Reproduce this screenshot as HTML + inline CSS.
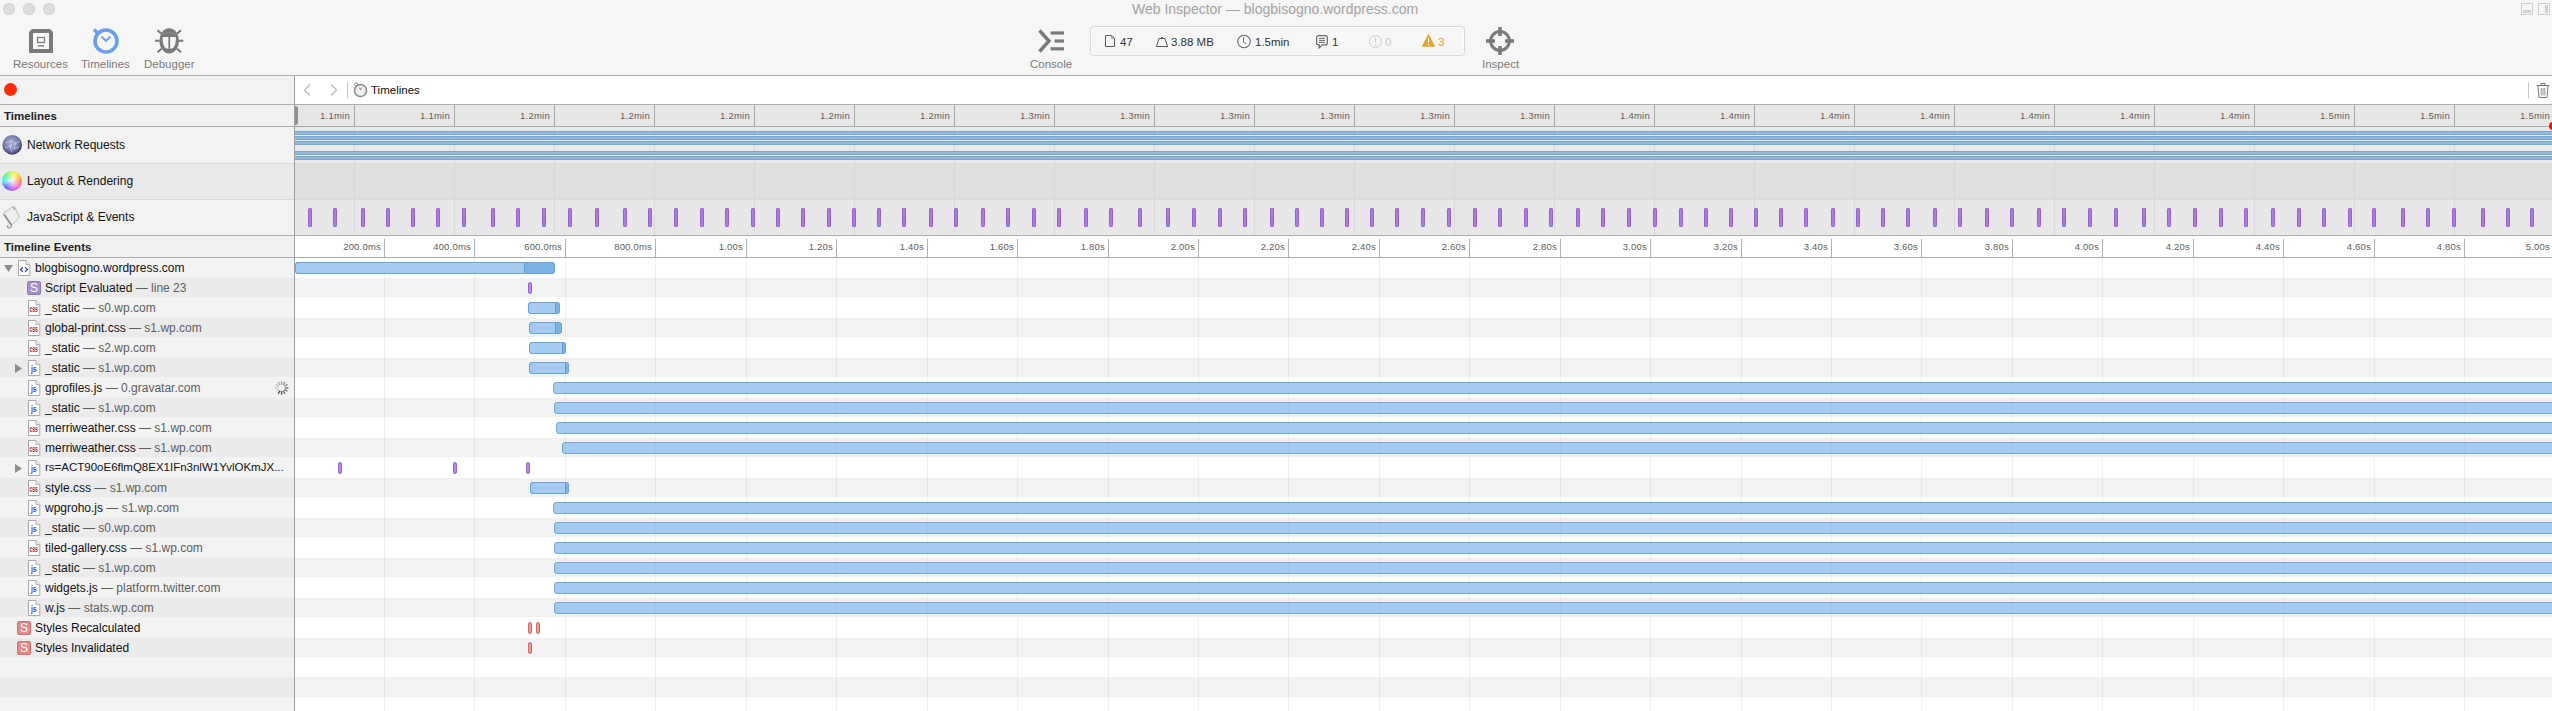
<!DOCTYPE html>
<html><head><meta charset="utf-8"><title>Web Inspector</title>
<style>
html,body{margin:0;padding:0;width:2552px;height:711px;overflow:hidden;background:#fff;font-family:"Liberation Sans", sans-serif;}
.abs{position:absolute;}
.t{position:absolute;white-space:pre;line-height:1;}
.ln{position:absolute;}
</style></head><body>
<div class="abs" style="left:0;top:0;width:2552px;height:711px;overflow:hidden;">

<div class="abs" style="left:0;top:0;width:2552px;height:75px;background:#f6f6f6"></div>
<div class="ln" style="left:0;top:75px;width:2552px;height:1px;background:#acacac"></div>
<div class="abs" style="left:3px;top:3px;width:12px;height:12px;border-radius:50%;background:#dddddd;box-shadow:inset 0 0 0 1px #d2d2d2"></div>
<div class="abs" style="left:23px;top:3px;width:12px;height:12px;border-radius:50%;background:#dddddd;box-shadow:inset 0 0 0 1px #d2d2d2"></div>
<div class="abs" style="left:43px;top:3px;width:12px;height:12px;border-radius:50%;background:#dddddd;box-shadow:inset 0 0 0 1px #d2d2d2"></div>
<div class="t" style="left:1132px;top:2px;font-size:14px;color:#a3a3a3">Web Inspector — blogbisogno.wordpress.com</div>
<svg class="abs" style="left:2519px;top:2px" width="34" height="15" viewBox="0 0 34 15"><rect x="2.5" y="1.5" width="11" height="11" fill="none" stroke="#cfcfcf" stroke-width="1"/><rect x="4" y="8" width="8" height="3" fill="#cfcfcf"/><rect x="19.5" y="1.5" width="11" height="11" fill="none" stroke="#cfcfcf" stroke-width="1"/><rect x="26" y="3" width="3" height="8" fill="#cfcfcf"/></svg>
<svg class="abs" style="left:29px;top:29px" width="24" height="24" viewBox="0 0 24 24"><path d="M3 0 H21 L24 3 V24 H0 V3 Z" fill="#7a7a7a"/><rect x="4" y="4" width="16" height="16" fill="#f6f6f6"/><rect x="8.5" y="8.5" width="7" height="5" fill="none" stroke="#7a7a7a" stroke-width="1.2"/><rect x="9" y="16" width="6" height="1.6" fill="#8a8a8a"/></svg>
<div class="t" style="left:13px;top:59px;font-size:11.5px;color:#7b7b7b">Resources</div>
<svg class="abs" style="left:89px;top:25px" width="34" height="32" viewBox="0 0 34 32"><circle cx="17" cy="16" r="11" fill="none" stroke="#6a9ef0" stroke-width="3.6"/><path d="M5 4.5 L9.5 9" stroke="#6a9ef0" stroke-width="3.6" fill="none"/><path d="M12.5 11.5 L17 16 L21.5 11.5" stroke="#6a9ef0" stroke-width="1.8" fill="none"/></svg>
<div class="t" style="left:81px;top:59px;font-size:11.5px;color:#7b7b7b">Timelines</div>
<svg class="abs" style="left:150px;top:24px" width="40" height="34" viewBox="0 0 40 34"><path d="M5 16.8 H9.8 M28.8 16.8 H33.4 M7.4 6.2 L11.4 9.6 M31 6.2 L27 9.6 M7.6 28.2 L11.4 24.8 M31 28.2 L27 24.8" stroke="#7a7a7a" stroke-width="2.1" fill="none"/><ellipse cx="19.2" cy="16.9" rx="9.8" ry="12.6" fill="#7a7a7a"/><path d="M12.7 12.9 H18.4 V25 Q13 24.5 12.7 16 Z" fill="#f6f6f6"/><path d="M25.8 12.9 H20.1 V25 Q25.5 24.5 25.8 16 Z" fill="#f6f6f6"/><path d="M11.5 9.8 Q19.2 7.6 27 9.8" stroke="#8e8e8e" stroke-width="0.7" fill="none"/></svg>
<div class="t" style="left:144px;top:59px;font-size:11.5px;color:#7b7b7b">Debugger</div>
<svg class="abs" style="left:1036px;top:28px" width="30" height="26" viewBox="0 0 30 26"><path d="M3.5 2.5 L13 13 L3.5 23.5" stroke="#7a7a7a" stroke-width="3.4" fill="none" stroke-linejoin="miter"/><rect x="14.6" y="3.4" width="13.4" height="3.2" fill="#7a7a7a"/><rect x="18.6" y="11.4" width="9.4" height="3.2" fill="#7a7a7a"/><rect x="14.6" y="19.2" width="13.4" height="3.2" fill="#7a7a7a"/></svg>
<div class="t" style="left:1030px;top:59px;font-size:11.5px;color:#7b7b7b">Console</div>
<div class="abs" style="left:1090px;top:26px;width:373px;height:28px;border:1px solid #d9d9d9;border-radius:4px;background:#f7f7f7;box-shadow:inset 0 0 0 1px #fbfbfb"></div>
<svg class="abs" style="left:1104px;top:34px" width="12" height="14" viewBox="0 0 12 14"><path d="M1.5 1.5 H7.5 L10.5 4.5 V12.5 H1.5 Z" fill="none" stroke="#555" stroke-width="1"/><path d="M7.5 1.5 V4.5 H10.5" fill="none" stroke="#888" stroke-width="0.8"/></svg>
<div class="t" style="left:1120px;top:37px;font-size:11.5px;color:#333">47</div>
<svg class="abs" style="left:1155px;top:34px" width="14" height="14" viewBox="0 0 14 14"><path d="M4 4.5 H10 L12.5 12.5 H1.5 Z" fill="none" stroke="#555" stroke-width="1"/><path d="M5.8 4.5 Q7 1.5 8.2 4.5" fill="none" stroke="#555" stroke-width="1"/></svg>
<div class="t" style="left:1171px;top:37px;font-size:11.5px;color:#333">3.88 MB</div>
<svg class="abs" style="left:1236px;top:34px" width="16" height="16" viewBox="0 0 16 16"><circle cx="8" cy="7.5" r="6.3" fill="none" stroke="#666" stroke-width="1.1"/><path d="M7.5 3.2 V8 L10 10" fill="none" stroke="#666" stroke-width="1"/></svg>
<div class="t" style="left:1255px;top:37px;font-size:11.5px;color:#333">1.5min</div>
<svg class="abs" style="left:1314px;top:33px" width="16" height="17" viewBox="0 0 16 17"><path d="M4.6 2.6 H11.3 Q13.3 2.6 13.3 4.6 V9.9 Q13.3 11.9 11.3 11.9 H8.2 L5 15.2 L5.4 11.9 H4.6 Q2.6 11.9 2.6 9.9 V4.6 Q2.6 2.6 4.6 2.6 Z" fill="none" stroke="#666" stroke-width="1.2" stroke-linejoin="round"/><path d="M5 5.35 H11 M5 7.4 H11 M5 9.4 H11" stroke="#666" stroke-width="1"/></svg>
<div class="t" style="left:1332px;top:37px;font-size:11.5px;color:#333">1</div>
<svg class="abs" style="left:1368px;top:34px" width="15" height="15" viewBox="0 0 15 15"><circle cx="7.5" cy="7.5" r="6" fill="none" stroke="#cdcdcd" stroke-width="1"/><path d="M7.5 3.5 V8.5 M7.5 10 V11.5" stroke="#cdcdcd" stroke-width="1.2"/></svg>
<div class="t" style="left:1385px;top:37px;font-size:11.5px;color:#c8c8c8">0</div>
<svg class="abs" style="left:1421px;top:33px" width="15" height="15" viewBox="0 0 15 15"><path d="M7.5 0.8 L14.3 13.8 H0.7 Z" fill="#e4a42a"/><path d="M7.5 5 V9.8 M7.5 11 V12.5" stroke="#fff" stroke-width="1.3"/></svg>
<div class="t" style="left:1438px;top:37px;font-size:11.5px;color:#e0a030">3</div>
<svg class="abs" style="left:1485px;top:26px" width="30" height="30" viewBox="0 0 30 30"><circle cx="15" cy="15" r="9.4" fill="none" stroke="#7a7a7a" stroke-width="3"/><rect x="13.2" y="1" width="3.6" height="9" fill="#7a7a7a"/><rect x="13.2" y="20" width="3.6" height="9" fill="#7a7a7a"/><rect x="1" y="13.2" width="9" height="3.6" fill="#7a7a7a"/><rect x="20" y="13.2" width="9" height="3.6" fill="#7a7a7a"/></svg>
<div class="t" style="left:1482px;top:59px;font-size:11.5px;color:#7b7b7b">Inspect</div>
<div class="abs" style="left:0;top:76px;width:294px;height:28px;background:#f2f2f2"></div>
<div class="abs" style="left:295px;top:76px;width:2257px;height:28px;background:#fff"></div>
<div class="abs" style="left:4px;top:83px;width:13px;height:13px;border-radius:50%;background:#ff2a06"></div>
<svg class="abs" style="left:300px;top:82px" width="42" height="16" viewBox="0 0 42 16"><path d="M10 2.5 L4.5 8 L10 13.5" stroke="#bdbdbd" stroke-width="1.3" fill="none"/><path d="M31 2.5 L36.5 8 L31 13.5" stroke="#bdbdbd" stroke-width="1.3" fill="none"/></svg>
<div class="abs" style="left:347px;top:82px;width:1px;height:16px;background:#c4c4c4"></div>
<svg class="abs" style="left:352px;top:81px" width="16" height="17" viewBox="0 0 16 17"><circle cx="8.5" cy="9.5" r="6" fill="#f0f0f4" stroke="#8a8a8a" stroke-width="1.6"/><circle cx="4" cy="3.4" r="1.5" fill="none" stroke="#888" stroke-width="1"/><path d="M7.5 6.5 L8.5 9 L9.6 6.5" stroke="#a34" stroke-width="0.6" fill="none"/></svg>
<div class="t" style="left:371px;top:85px;font-size:11.5px;color:#111">Timelines</div>
<div class="abs" style="left:2528px;top:82px;width:1px;height:16px;background:#c8c8c8"></div>
<svg class="abs" style="left:2535px;top:82px" width="16" height="17" viewBox="0 0 16 17"><path d="M1.5 3.5 H14.5" stroke="#777" stroke-width="1"/><path d="M6 3.5 V1.5 H10 V3.5" stroke="#777" stroke-width="1" fill="none"/><path d="M3 4 L4 15.5 H12 L13 4" stroke="#777" stroke-width="1" fill="none"/><path d="M6.2 6 V13.5 M8 6 V13.5 M9.8 6 V13.5" stroke="#777" stroke-width="0.8"/></svg>
<div class="ln" style="left:0;top:104px;width:2552px;height:1px;background:#acacac"></div>
<div class="abs" style="left:0;top:105px;width:294px;height:21px;background:#f0f0f0"></div>
<div class="abs" style="left:295px;top:105px;width:2257px;height:21px;background:#e7e7e7"></div>
<div class="t" style="left:4px;top:111px;font-size:11.5px;font-weight:bold;color:#222">Timelines</div>
<div class="ln" style="left:0;top:126px;width:2552px;height:1px;background:#a8a8a8"></div>
<div class="abs" style="left:0;top:127px;width:294px;height:36px;background:#f2f2f2"></div>
<div class="abs" style="left:295px;top:127px;width:2257px;height:36px;background:#e9e9e9"></div>
<div class="abs" style="left:0;top:164px;width:294px;height:35px;background:#eaeaea"></div>
<div class="abs" style="left:295px;top:164px;width:2257px;height:35px;background:#dfdfdf"></div>
<div class="abs" style="left:0;top:200px;width:294px;height:35px;background:#f2f2f2"></div>
<div class="abs" style="left:295px;top:200px;width:2257px;height:35px;background:#e7e7e7"></div>
<div class="ln" style="left:0;top:163px;width:2552px;height:1px;background:#d9d9d9"></div>
<div class="ln" style="left:0;top:199px;width:2552px;height:1px;background:#d9d9d9"></div>
<div class="ln" style="left:0;top:235px;width:2552px;height:1px;background:#ababab"></div>
<div class="ln" style="left:354px;top:105px;width:1px;height:21px;background:#a6a6a6"></div>
<div class="ln" style="left:354px;top:127px;width:1px;height:108px;background:#d8d8d8"></div>
<div class="t" style="left:320px;top:111px;width:29px;font-size:9.5px;letter-spacing:0.25px;color:#5e5e5e;text-align:right">1.1min</div>
<div class="ln" style="left:454px;top:105px;width:1px;height:21px;background:#a6a6a6"></div>
<div class="ln" style="left:454px;top:127px;width:1px;height:108px;background:#d8d8d8"></div>
<div class="t" style="left:420px;top:111px;width:29px;font-size:9.5px;letter-spacing:0.25px;color:#5e5e5e;text-align:right">1.1min</div>
<div class="ln" style="left:554px;top:105px;width:1px;height:21px;background:#a6a6a6"></div>
<div class="ln" style="left:554px;top:127px;width:1px;height:108px;background:#d8d8d8"></div>
<div class="t" style="left:520px;top:111px;width:29px;font-size:9.5px;letter-spacing:0.25px;color:#5e5e5e;text-align:right">1.2min</div>
<div class="ln" style="left:654px;top:105px;width:1px;height:21px;background:#a6a6a6"></div>
<div class="ln" style="left:654px;top:127px;width:1px;height:108px;background:#d8d8d8"></div>
<div class="t" style="left:620px;top:111px;width:29px;font-size:9.5px;letter-spacing:0.25px;color:#5e5e5e;text-align:right">1.2min</div>
<div class="ln" style="left:754px;top:105px;width:1px;height:21px;background:#a6a6a6"></div>
<div class="ln" style="left:754px;top:127px;width:1px;height:108px;background:#d8d8d8"></div>
<div class="t" style="left:720px;top:111px;width:29px;font-size:9.5px;letter-spacing:0.25px;color:#5e5e5e;text-align:right">1.2min</div>
<div class="ln" style="left:854px;top:105px;width:1px;height:21px;background:#a6a6a6"></div>
<div class="ln" style="left:854px;top:127px;width:1px;height:108px;background:#d8d8d8"></div>
<div class="t" style="left:820px;top:111px;width:29px;font-size:9.5px;letter-spacing:0.25px;color:#5e5e5e;text-align:right">1.2min</div>
<div class="ln" style="left:954px;top:105px;width:1px;height:21px;background:#a6a6a6"></div>
<div class="ln" style="left:954px;top:127px;width:1px;height:108px;background:#d8d8d8"></div>
<div class="t" style="left:920px;top:111px;width:29px;font-size:9.5px;letter-spacing:0.25px;color:#5e5e5e;text-align:right">1.2min</div>
<div class="ln" style="left:1054px;top:105px;width:1px;height:21px;background:#a6a6a6"></div>
<div class="ln" style="left:1054px;top:127px;width:1px;height:108px;background:#d8d8d8"></div>
<div class="t" style="left:1020px;top:111px;width:29px;font-size:9.5px;letter-spacing:0.25px;color:#5e5e5e;text-align:right">1.3min</div>
<div class="ln" style="left:1154px;top:105px;width:1px;height:21px;background:#a6a6a6"></div>
<div class="ln" style="left:1154px;top:127px;width:1px;height:108px;background:#d8d8d8"></div>
<div class="t" style="left:1120px;top:111px;width:29px;font-size:9.5px;letter-spacing:0.25px;color:#5e5e5e;text-align:right">1.3min</div>
<div class="ln" style="left:1254px;top:105px;width:1px;height:21px;background:#a6a6a6"></div>
<div class="ln" style="left:1254px;top:127px;width:1px;height:108px;background:#d8d8d8"></div>
<div class="t" style="left:1220px;top:111px;width:29px;font-size:9.5px;letter-spacing:0.25px;color:#5e5e5e;text-align:right">1.3min</div>
<div class="ln" style="left:1354px;top:105px;width:1px;height:21px;background:#a6a6a6"></div>
<div class="ln" style="left:1354px;top:127px;width:1px;height:108px;background:#d8d8d8"></div>
<div class="t" style="left:1320px;top:111px;width:29px;font-size:9.5px;letter-spacing:0.25px;color:#5e5e5e;text-align:right">1.3min</div>
<div class="ln" style="left:1454px;top:105px;width:1px;height:21px;background:#a6a6a6"></div>
<div class="ln" style="left:1454px;top:127px;width:1px;height:108px;background:#d8d8d8"></div>
<div class="t" style="left:1420px;top:111px;width:29px;font-size:9.5px;letter-spacing:0.25px;color:#5e5e5e;text-align:right">1.3min</div>
<div class="ln" style="left:1554px;top:105px;width:1px;height:21px;background:#a6a6a6"></div>
<div class="ln" style="left:1554px;top:127px;width:1px;height:108px;background:#d8d8d8"></div>
<div class="t" style="left:1520px;top:111px;width:29px;font-size:9.5px;letter-spacing:0.25px;color:#5e5e5e;text-align:right">1.3min</div>
<div class="ln" style="left:1654px;top:105px;width:1px;height:21px;background:#a6a6a6"></div>
<div class="ln" style="left:1654px;top:127px;width:1px;height:108px;background:#d8d8d8"></div>
<div class="t" style="left:1620px;top:111px;width:29px;font-size:9.5px;letter-spacing:0.25px;color:#5e5e5e;text-align:right">1.4min</div>
<div class="ln" style="left:1754px;top:105px;width:1px;height:21px;background:#a6a6a6"></div>
<div class="ln" style="left:1754px;top:127px;width:1px;height:108px;background:#d8d8d8"></div>
<div class="t" style="left:1720px;top:111px;width:29px;font-size:9.5px;letter-spacing:0.25px;color:#5e5e5e;text-align:right">1.4min</div>
<div class="ln" style="left:1854px;top:105px;width:1px;height:21px;background:#a6a6a6"></div>
<div class="ln" style="left:1854px;top:127px;width:1px;height:108px;background:#d8d8d8"></div>
<div class="t" style="left:1820px;top:111px;width:29px;font-size:9.5px;letter-spacing:0.25px;color:#5e5e5e;text-align:right">1.4min</div>
<div class="ln" style="left:1954px;top:105px;width:1px;height:21px;background:#a6a6a6"></div>
<div class="ln" style="left:1954px;top:127px;width:1px;height:108px;background:#d8d8d8"></div>
<div class="t" style="left:1920px;top:111px;width:29px;font-size:9.5px;letter-spacing:0.25px;color:#5e5e5e;text-align:right">1.4min</div>
<div class="ln" style="left:2054px;top:105px;width:1px;height:21px;background:#a6a6a6"></div>
<div class="ln" style="left:2054px;top:127px;width:1px;height:108px;background:#d8d8d8"></div>
<div class="t" style="left:2020px;top:111px;width:29px;font-size:9.5px;letter-spacing:0.25px;color:#5e5e5e;text-align:right">1.4min</div>
<div class="ln" style="left:2154px;top:105px;width:1px;height:21px;background:#a6a6a6"></div>
<div class="ln" style="left:2154px;top:127px;width:1px;height:108px;background:#d8d8d8"></div>
<div class="t" style="left:2120px;top:111px;width:29px;font-size:9.5px;letter-spacing:0.25px;color:#5e5e5e;text-align:right">1.4min</div>
<div class="ln" style="left:2254px;top:105px;width:1px;height:21px;background:#a6a6a6"></div>
<div class="ln" style="left:2254px;top:127px;width:1px;height:108px;background:#d8d8d8"></div>
<div class="t" style="left:2220px;top:111px;width:29px;font-size:9.5px;letter-spacing:0.25px;color:#5e5e5e;text-align:right">1.4min</div>
<div class="ln" style="left:2354px;top:105px;width:1px;height:21px;background:#a6a6a6"></div>
<div class="ln" style="left:2354px;top:127px;width:1px;height:108px;background:#d8d8d8"></div>
<div class="t" style="left:2320px;top:111px;width:29px;font-size:9.5px;letter-spacing:0.25px;color:#5e5e5e;text-align:right">1.5min</div>
<div class="ln" style="left:2454px;top:105px;width:1px;height:21px;background:#a6a6a6"></div>
<div class="ln" style="left:2454px;top:127px;width:1px;height:108px;background:#d8d8d8"></div>
<div class="t" style="left:2420px;top:111px;width:29px;font-size:9.5px;letter-spacing:0.25px;color:#5e5e5e;text-align:right">1.5min</div>
<div class="t" style="left:2520px;top:111px;width:29px;font-size:9.5px;letter-spacing:0.25px;color:#5e5e5e;text-align:right">1.5min</div>
<div class="abs" style="left:294px;top:106px;width:4px;height:19px;background:#8f8f8f;border-radius:0 3px 3px 0"></div>
<div class="abs" style="left:2549px;top:122px;width:8px;height:8px;border-radius:50%;background:#f01010"></div>
<div class="abs" style="left:295px;top:131px;width:2257px;height:4px;background:#93b9dd;box-shadow:inset 0 1px 0 #7aa7d2, inset 0 -1px 0 #7aa7d2"></div>
<div class="abs" style="left:295px;top:136px;width:2257px;height:4px;background:#93b9dd;box-shadow:inset 0 1px 0 #7aa7d2, inset 0 -1px 0 #7aa7d2"></div>
<div class="abs" style="left:295px;top:141px;width:2257px;height:4px;background:#93b9dd;box-shadow:inset 0 1px 0 #7aa7d2, inset 0 -1px 0 #7aa7d2"></div>
<div class="abs" style="left:295px;top:151px;width:2257px;height:4px;background:#93b9dd;box-shadow:inset 0 1px 0 #7aa7d2, inset 0 -1px 0 #7aa7d2"></div>
<div class="abs" style="left:295px;top:156px;width:2257px;height:4px;background:#93b9dd;box-shadow:inset 0 1px 0 #7aa7d2, inset 0 -1px 0 #7aa7d2"></div>
<svg class="abs" style="left:2px;top:135px" width="21" height="21" viewBox="0 0 21 21"><defs><radialGradient id="gg" cx="0.45" cy="0.4" r="0.6"><stop offset="0" stop-color="#a4a9d4"/><stop offset="0.6" stop-color="#7a80b0"/><stop offset="1" stop-color="#363c5e"/></radialGradient></defs><circle cx="10.2" cy="9.9" r="9.8" fill="url(#gg)"/><path d="M4 8 L9 5.5 L14 8 L18 6 M3 13 L8 11 L12 14 L17 12 M9 5.5 L8 11 L10 18 M14 8 L12 14 M8 11 L14 8" stroke="rgba(230,235,255,0.55)" stroke-width="0.9" fill="none"/></svg>
<div class="t" style="left:27px;top:139px;font-size:12px;color:#111">Network Requests</div>
<div class="abs" style="left:2px;top:171px;width:20px;height:20px;border-radius:50%;background:conic-gradient(from 0deg, #c8f040, #ffee10 30deg, #ff6a3a 90deg, #ff40d0 135deg, #a040ff 180deg, #4040f0 225deg, #20f0ff 270deg, #40f060 315deg, #c8f040 360deg)"></div>
<div class="abs" style="left:2px;top:171px;width:20px;height:20px;border-radius:50%;background:radial-gradient(circle, rgba(255,255,255,0.95) 0%, rgba(255,255,255,0.45) 40%, rgba(255,255,255,0) 80%)"></div>
<div class="t" style="left:27px;top:175px;font-size:12px;color:#111">Layout &amp; Rendering</div>
<svg class="abs" style="left:0px;top:200px" width="24" height="32" viewBox="0 0 24 32"><path d="M12.9 6.7 Q15.8 6.5 15.8 9.6 L19.6 17.2 L12 24.9 L3.8 14.4 Q3.3 12.6 5 12 Z" fill="#eeeeee" stroke="#b4b4b4" stroke-width="0.9"/><path d="M4 14.6 L11.2 24.8" stroke="#8e8e8e" stroke-width="1.8" fill="none"/><path d="M11.4 24.6 Q11.6 28.6 8.2 27.6 Q6.6 26.8 8.4 25.2" stroke="#909090" stroke-width="1.3" fill="none"/><path d="M12.6 7.2 Q14.8 7.6 14.6 10" stroke="#a8a8a8" stroke-width="1.1" fill="none"/></svg>
<div class="t" style="left:27px;top:211px;font-size:12px;color:#111">JavaScript &amp; Events</div>
<div class="abs" style="left:308px;top:208px;width:4px;height:19px;border-radius:2px;background:#a97ddb;box-shadow:inset 0 0 0 0.8px #8c5cc6"></div>
<div class="abs" style="left:333px;top:208px;width:4px;height:19px;border-radius:2px;background:#a97ddb;box-shadow:inset 0 0 0 0.8px #8c5cc6"></div>
<div class="abs" style="left:361px;top:208px;width:4px;height:19px;border-radius:2px;background:#a97ddb;box-shadow:inset 0 0 0 0.8px #8c5cc6"></div>
<div class="abs" style="left:386px;top:208px;width:4px;height:19px;border-radius:2px;background:#a97ddb;box-shadow:inset 0 0 0 0.8px #8c5cc6"></div>
<div class="abs" style="left:411px;top:208px;width:4px;height:19px;border-radius:2px;background:#a97ddb;box-shadow:inset 0 0 0 0.8px #8c5cc6"></div>
<div class="abs" style="left:436px;top:208px;width:4px;height:19px;border-radius:2px;background:#a97ddb;box-shadow:inset 0 0 0 0.8px #8c5cc6"></div>
<div class="abs" style="left:462px;top:208px;width:4px;height:19px;border-radius:2px;background:#a97ddb;box-shadow:inset 0 0 0 0.8px #8c5cc6"></div>
<div class="abs" style="left:491px;top:208px;width:4px;height:19px;border-radius:2px;background:#a97ddb;box-shadow:inset 0 0 0 0.8px #8c5cc6"></div>
<div class="abs" style="left:516px;top:208px;width:4px;height:19px;border-radius:2px;background:#a97ddb;box-shadow:inset 0 0 0 0.8px #8c5cc6"></div>
<div class="abs" style="left:542px;top:208px;width:4px;height:19px;border-radius:2px;background:#a97ddb;box-shadow:inset 0 0 0 0.8px #8c5cc6"></div>
<div class="abs" style="left:568px;top:208px;width:4px;height:19px;border-radius:2px;background:#a97ddb;box-shadow:inset 0 0 0 0.8px #8c5cc6"></div>
<div class="abs" style="left:595px;top:208px;width:4px;height:19px;border-radius:2px;background:#a97ddb;box-shadow:inset 0 0 0 0.8px #8c5cc6"></div>
<div class="abs" style="left:623px;top:208px;width:4px;height:19px;border-radius:2px;background:#a97ddb;box-shadow:inset 0 0 0 0.8px #8c5cc6"></div>
<div class="abs" style="left:648px;top:208px;width:4px;height:19px;border-radius:2px;background:#a97ddb;box-shadow:inset 0 0 0 0.8px #8c5cc6"></div>
<div class="abs" style="left:674px;top:208px;width:4px;height:19px;border-radius:2px;background:#a97ddb;box-shadow:inset 0 0 0 0.8px #8c5cc6"></div>
<div class="abs" style="left:700px;top:208px;width:4px;height:19px;border-radius:2px;background:#a97ddb;box-shadow:inset 0 0 0 0.8px #8c5cc6"></div>
<div class="abs" style="left:725px;top:208px;width:4px;height:19px;border-radius:2px;background:#a97ddb;box-shadow:inset 0 0 0 0.8px #8c5cc6"></div>
<div class="abs" style="left:751px;top:208px;width:4px;height:19px;border-radius:2px;background:#a97ddb;box-shadow:inset 0 0 0 0.8px #8c5cc6"></div>
<div class="abs" style="left:776px;top:208px;width:4px;height:19px;border-radius:2px;background:#a97ddb;box-shadow:inset 0 0 0 0.8px #8c5cc6"></div>
<div class="abs" style="left:801px;top:208px;width:4px;height:19px;border-radius:2px;background:#a97ddb;box-shadow:inset 0 0 0 0.8px #8c5cc6"></div>
<div class="abs" style="left:827px;top:208px;width:4px;height:19px;border-radius:2px;background:#a97ddb;box-shadow:inset 0 0 0 0.8px #8c5cc6"></div>
<div class="abs" style="left:852px;top:208px;width:4px;height:19px;border-radius:2px;background:#a97ddb;box-shadow:inset 0 0 0 0.8px #8c5cc6"></div>
<div class="abs" style="left:877px;top:208px;width:4px;height:19px;border-radius:2px;background:#a97ddb;box-shadow:inset 0 0 0 0.8px #8c5cc6"></div>
<div class="abs" style="left:902px;top:208px;width:4px;height:19px;border-radius:2px;background:#a97ddb;box-shadow:inset 0 0 0 0.8px #8c5cc6"></div>
<div class="abs" style="left:929px;top:208px;width:4px;height:19px;border-radius:2px;background:#a97ddb;box-shadow:inset 0 0 0 0.8px #8c5cc6"></div>
<div class="abs" style="left:954px;top:208px;width:4px;height:19px;border-radius:2px;background:#a97ddb;box-shadow:inset 0 0 0 0.8px #8c5cc6"></div>
<div class="abs" style="left:981px;top:208px;width:4px;height:19px;border-radius:2px;background:#a97ddb;box-shadow:inset 0 0 0 0.8px #8c5cc6"></div>
<div class="abs" style="left:1006px;top:208px;width:4px;height:19px;border-radius:2px;background:#a97ddb;box-shadow:inset 0 0 0 0.8px #8c5cc6"></div>
<div class="abs" style="left:1032px;top:208px;width:4px;height:19px;border-radius:2px;background:#a97ddb;box-shadow:inset 0 0 0 0.8px #8c5cc6"></div>
<div class="abs" style="left:1057px;top:208px;width:4px;height:19px;border-radius:2px;background:#a97ddb;box-shadow:inset 0 0 0 0.8px #8c5cc6"></div>
<div class="abs" style="left:1084px;top:208px;width:4px;height:19px;border-radius:2px;background:#a97ddb;box-shadow:inset 0 0 0 0.8px #8c5cc6"></div>
<div class="abs" style="left:1109px;top:208px;width:4px;height:19px;border-radius:2px;background:#a97ddb;box-shadow:inset 0 0 0 0.8px #8c5cc6"></div>
<div class="abs" style="left:1138px;top:208px;width:4px;height:19px;border-radius:2px;background:#a97ddb;box-shadow:inset 0 0 0 0.8px #8c5cc6"></div>
<div class="abs" style="left:1166px;top:208px;width:4px;height:19px;border-radius:2px;background:#a97ddb;box-shadow:inset 0 0 0 0.8px #8c5cc6"></div>
<div class="abs" style="left:1192px;top:208px;width:4px;height:19px;border-radius:2px;background:#a97ddb;box-shadow:inset 0 0 0 0.8px #8c5cc6"></div>
<div class="abs" style="left:1218px;top:208px;width:4px;height:19px;border-radius:2px;background:#a97ddb;box-shadow:inset 0 0 0 0.8px #8c5cc6"></div>
<div class="abs" style="left:1243px;top:208px;width:4px;height:19px;border-radius:2px;background:#a97ddb;box-shadow:inset 0 0 0 0.8px #8c5cc6"></div>
<div class="abs" style="left:1270px;top:208px;width:4px;height:19px;border-radius:2px;background:#a97ddb;box-shadow:inset 0 0 0 0.8px #8c5cc6"></div>
<div class="abs" style="left:1295px;top:208px;width:4px;height:19px;border-radius:2px;background:#a97ddb;box-shadow:inset 0 0 0 0.8px #8c5cc6"></div>
<div class="abs" style="left:1320px;top:208px;width:4px;height:19px;border-radius:2px;background:#a97ddb;box-shadow:inset 0 0 0 0.8px #8c5cc6"></div>
<div class="abs" style="left:1345px;top:208px;width:4px;height:19px;border-radius:2px;background:#a97ddb;box-shadow:inset 0 0 0 0.8px #8c5cc6"></div>
<div class="abs" style="left:1370px;top:208px;width:4px;height:19px;border-radius:2px;background:#a97ddb;box-shadow:inset 0 0 0 0.8px #8c5cc6"></div>
<div class="abs" style="left:1395px;top:208px;width:4px;height:19px;border-radius:2px;background:#a97ddb;box-shadow:inset 0 0 0 0.8px #8c5cc6"></div>
<div class="abs" style="left:1421px;top:208px;width:4px;height:19px;border-radius:2px;background:#a97ddb;box-shadow:inset 0 0 0 0.8px #8c5cc6"></div>
<div class="abs" style="left:1447px;top:208px;width:4px;height:19px;border-radius:2px;background:#a97ddb;box-shadow:inset 0 0 0 0.8px #8c5cc6"></div>
<div class="abs" style="left:1473px;top:208px;width:4px;height:19px;border-radius:2px;background:#a97ddb;box-shadow:inset 0 0 0 0.8px #8c5cc6"></div>
<div class="abs" style="left:1498px;top:208px;width:4px;height:19px;border-radius:2px;background:#a97ddb;box-shadow:inset 0 0 0 0.8px #8c5cc6"></div>
<div class="abs" style="left:1524px;top:208px;width:4px;height:19px;border-radius:2px;background:#a97ddb;box-shadow:inset 0 0 0 0.8px #8c5cc6"></div>
<div class="abs" style="left:1549px;top:208px;width:4px;height:19px;border-radius:2px;background:#a97ddb;box-shadow:inset 0 0 0 0.8px #8c5cc6"></div>
<div class="abs" style="left:1576px;top:208px;width:4px;height:19px;border-radius:2px;background:#a97ddb;box-shadow:inset 0 0 0 0.8px #8c5cc6"></div>
<div class="abs" style="left:1601px;top:208px;width:4px;height:19px;border-radius:2px;background:#a97ddb;box-shadow:inset 0 0 0 0.8px #8c5cc6"></div>
<div class="abs" style="left:1627px;top:208px;width:4px;height:19px;border-radius:2px;background:#a97ddb;box-shadow:inset 0 0 0 0.8px #8c5cc6"></div>
<div class="abs" style="left:1653px;top:208px;width:4px;height:19px;border-radius:2px;background:#a97ddb;box-shadow:inset 0 0 0 0.8px #8c5cc6"></div>
<div class="abs" style="left:1679px;top:208px;width:4px;height:19px;border-radius:2px;background:#a97ddb;box-shadow:inset 0 0 0 0.8px #8c5cc6"></div>
<div class="abs" style="left:1704px;top:208px;width:4px;height:19px;border-radius:2px;background:#a97ddb;box-shadow:inset 0 0 0 0.8px #8c5cc6"></div>
<div class="abs" style="left:1729px;top:208px;width:4px;height:19px;border-radius:2px;background:#a97ddb;box-shadow:inset 0 0 0 0.8px #8c5cc6"></div>
<div class="abs" style="left:1754px;top:208px;width:4px;height:19px;border-radius:2px;background:#a97ddb;box-shadow:inset 0 0 0 0.8px #8c5cc6"></div>
<div class="abs" style="left:1779px;top:208px;width:4px;height:19px;border-radius:2px;background:#a97ddb;box-shadow:inset 0 0 0 0.8px #8c5cc6"></div>
<div class="abs" style="left:1804px;top:208px;width:4px;height:19px;border-radius:2px;background:#a97ddb;box-shadow:inset 0 0 0 0.8px #8c5cc6"></div>
<div class="abs" style="left:1831px;top:208px;width:4px;height:19px;border-radius:2px;background:#a97ddb;box-shadow:inset 0 0 0 0.8px #8c5cc6"></div>
<div class="abs" style="left:1856px;top:208px;width:4px;height:19px;border-radius:2px;background:#a97ddb;box-shadow:inset 0 0 0 0.8px #8c5cc6"></div>
<div class="abs" style="left:1881px;top:208px;width:4px;height:19px;border-radius:2px;background:#a97ddb;box-shadow:inset 0 0 0 0.8px #8c5cc6"></div>
<div class="abs" style="left:1906px;top:208px;width:4px;height:19px;border-radius:2px;background:#a97ddb;box-shadow:inset 0 0 0 0.8px #8c5cc6"></div>
<div class="abs" style="left:1933px;top:208px;width:4px;height:19px;border-radius:2px;background:#a97ddb;box-shadow:inset 0 0 0 0.8px #8c5cc6"></div>
<div class="abs" style="left:1958px;top:208px;width:4px;height:19px;border-radius:2px;background:#a97ddb;box-shadow:inset 0 0 0 0.8px #8c5cc6"></div>
<div class="abs" style="left:1985px;top:208px;width:4px;height:19px;border-radius:2px;background:#a97ddb;box-shadow:inset 0 0 0 0.8px #8c5cc6"></div>
<div class="abs" style="left:2010px;top:208px;width:4px;height:19px;border-radius:2px;background:#a97ddb;box-shadow:inset 0 0 0 0.8px #8c5cc6"></div>
<div class="abs" style="left:2037px;top:208px;width:4px;height:19px;border-radius:2px;background:#a97ddb;box-shadow:inset 0 0 0 0.8px #8c5cc6"></div>
<div class="abs" style="left:2062px;top:208px;width:4px;height:19px;border-radius:2px;background:#a97ddb;box-shadow:inset 0 0 0 0.8px #8c5cc6"></div>
<div class="abs" style="left:2088px;top:208px;width:4px;height:19px;border-radius:2px;background:#a97ddb;box-shadow:inset 0 0 0 0.8px #8c5cc6"></div>
<div class="abs" style="left:2114px;top:208px;width:4px;height:19px;border-radius:2px;background:#a97ddb;box-shadow:inset 0 0 0 0.8px #8c5cc6"></div>
<div class="abs" style="left:2142px;top:208px;width:4px;height:19px;border-radius:2px;background:#a97ddb;box-shadow:inset 0 0 0 0.8px #8c5cc6"></div>
<div class="abs" style="left:2167px;top:208px;width:4px;height:19px;border-radius:2px;background:#a97ddb;box-shadow:inset 0 0 0 0.8px #8c5cc6"></div>
<div class="abs" style="left:2193px;top:208px;width:4px;height:19px;border-radius:2px;background:#a97ddb;box-shadow:inset 0 0 0 0.8px #8c5cc6"></div>
<div class="abs" style="left:2219px;top:208px;width:4px;height:19px;border-radius:2px;background:#a97ddb;box-shadow:inset 0 0 0 0.8px #8c5cc6"></div>
<div class="abs" style="left:2244px;top:208px;width:4px;height:19px;border-radius:2px;background:#a97ddb;box-shadow:inset 0 0 0 0.8px #8c5cc6"></div>
<div class="abs" style="left:2271px;top:208px;width:4px;height:19px;border-radius:2px;background:#a97ddb;box-shadow:inset 0 0 0 0.8px #8c5cc6"></div>
<div class="abs" style="left:2297px;top:208px;width:4px;height:19px;border-radius:2px;background:#a97ddb;box-shadow:inset 0 0 0 0.8px #8c5cc6"></div>
<div class="abs" style="left:2322px;top:208px;width:4px;height:19px;border-radius:2px;background:#a97ddb;box-shadow:inset 0 0 0 0.8px #8c5cc6"></div>
<div class="abs" style="left:2348px;top:208px;width:4px;height:19px;border-radius:2px;background:#a97ddb;box-shadow:inset 0 0 0 0.8px #8c5cc6"></div>
<div class="abs" style="left:2372px;top:208px;width:4px;height:19px;border-radius:2px;background:#a97ddb;box-shadow:inset 0 0 0 0.8px #8c5cc6"></div>
<div class="abs" style="left:2401px;top:208px;width:4px;height:19px;border-radius:2px;background:#a97ddb;box-shadow:inset 0 0 0 0.8px #8c5cc6"></div>
<div class="abs" style="left:2426px;top:208px;width:4px;height:19px;border-radius:2px;background:#a97ddb;box-shadow:inset 0 0 0 0.8px #8c5cc6"></div>
<div class="abs" style="left:2452px;top:208px;width:4px;height:19px;border-radius:2px;background:#a97ddb;box-shadow:inset 0 0 0 0.8px #8c5cc6"></div>
<div class="abs" style="left:2481px;top:208px;width:4px;height:19px;border-radius:2px;background:#a97ddb;box-shadow:inset 0 0 0 0.8px #8c5cc6"></div>
<div class="abs" style="left:2506px;top:208px;width:4px;height:19px;border-radius:2px;background:#a97ddb;box-shadow:inset 0 0 0 0.8px #8c5cc6"></div>
<div class="abs" style="left:2530px;top:208px;width:4px;height:19px;border-radius:2px;background:#a97ddb;box-shadow:inset 0 0 0 0.8px #8c5cc6"></div>
<div class="abs" style="left:0;top:236px;width:294px;height:21px;background:#f0f0f0"></div>
<div class="abs" style="left:295px;top:236px;width:2257px;height:21px;background:#fff"></div>
<div class="t" style="left:4px;top:242px;font-size:11.5px;font-weight:bold;color:#222">Timeline Events</div>
<div class="ln" style="left:0;top:257px;width:2552px;height:1px;background:#acacac"></div>
<div class="abs" style="left:0;top:258px;width:294px;height:453px;background:#f3f3f3"></div>
<div class="abs" style="left:295px;top:258px;width:2257px;height:453px;background:#ffffff"></div>
<div class="abs" style="left:0;top:278px;width:294px;height:19px;background:#ebebeb"></div>
<div class="abs" style="left:295px;top:278px;width:2257px;height:19px;background:#f2f2f2"></div>
<div class="abs" style="left:0;top:318px;width:294px;height:19px;background:#ebebeb"></div>
<div class="abs" style="left:295px;top:318px;width:2257px;height:19px;background:#f2f2f2"></div>
<div class="abs" style="left:0;top:358px;width:294px;height:19px;background:#ebebeb"></div>
<div class="abs" style="left:295px;top:358px;width:2257px;height:19px;background:#f2f2f2"></div>
<div class="abs" style="left:0;top:398px;width:294px;height:19px;background:#ebebeb"></div>
<div class="abs" style="left:295px;top:398px;width:2257px;height:19px;background:#f2f2f2"></div>
<div class="abs" style="left:0;top:438px;width:294px;height:19px;background:#ebebeb"></div>
<div class="abs" style="left:295px;top:438px;width:2257px;height:19px;background:#f2f2f2"></div>
<div class="abs" style="left:0;top:478px;width:294px;height:19px;background:#ebebeb"></div>
<div class="abs" style="left:295px;top:478px;width:2257px;height:19px;background:#f2f2f2"></div>
<div class="abs" style="left:0;top:518px;width:294px;height:19px;background:#ebebeb"></div>
<div class="abs" style="left:295px;top:518px;width:2257px;height:19px;background:#f2f2f2"></div>
<div class="abs" style="left:0;top:558px;width:294px;height:19px;background:#ebebeb"></div>
<div class="abs" style="left:295px;top:558px;width:2257px;height:19px;background:#f2f2f2"></div>
<div class="abs" style="left:0;top:598px;width:294px;height:19px;background:#ebebeb"></div>
<div class="abs" style="left:295px;top:598px;width:2257px;height:19px;background:#f2f2f2"></div>
<div class="abs" style="left:0;top:638px;width:294px;height:19px;background:#ebebeb"></div>
<div class="abs" style="left:295px;top:638px;width:2257px;height:19px;background:#f2f2f2"></div>
<div class="abs" style="left:0;top:677px;width:294px;height:20px;background:#ebebeb"></div>
<div class="abs" style="left:295px;top:677px;width:2257px;height:20px;background:#f2f2f2"></div>
<div class="ln" style="left:384px;top:239px;width:1px;height:18px;background:#b0b0b0"></div>
<div class="ln" style="left:384px;top:258px;width:1px;height:453px;background:rgba(0,0,0,0.05)"></div>
<div class="t" style="left:341px;top:242px;width:40px;font-size:9.5px;letter-spacing:0.2px;color:#5e5e5e;text-align:right">200.0ms</div>
<div class="ln" style="left:474px;top:239px;width:1px;height:18px;background:#b0b0b0"></div>
<div class="ln" style="left:474px;top:258px;width:1px;height:453px;background:rgba(0,0,0,0.05)"></div>
<div class="t" style="left:431px;top:242px;width:40px;font-size:9.5px;letter-spacing:0.2px;color:#5e5e5e;text-align:right">400.0ms</div>
<div class="ln" style="left:565px;top:239px;width:1px;height:18px;background:#b0b0b0"></div>
<div class="ln" style="left:565px;top:258px;width:1px;height:453px;background:rgba(0,0,0,0.05)"></div>
<div class="t" style="left:522px;top:242px;width:40px;font-size:9.5px;letter-spacing:0.2px;color:#5e5e5e;text-align:right">600.0ms</div>
<div class="ln" style="left:655px;top:239px;width:1px;height:18px;background:#b0b0b0"></div>
<div class="ln" style="left:655px;top:258px;width:1px;height:453px;background:rgba(0,0,0,0.05)"></div>
<div class="t" style="left:612px;top:242px;width:40px;font-size:9.5px;letter-spacing:0.2px;color:#5e5e5e;text-align:right">800.0ms</div>
<div class="ln" style="left:746px;top:239px;width:1px;height:18px;background:#b0b0b0"></div>
<div class="ln" style="left:746px;top:258px;width:1px;height:453px;background:rgba(0,0,0,0.05)"></div>
<div class="t" style="left:703px;top:242px;width:40px;font-size:9.5px;letter-spacing:0.2px;color:#5e5e5e;text-align:right">1.00s</div>
<div class="ln" style="left:836px;top:239px;width:1px;height:18px;background:#b0b0b0"></div>
<div class="ln" style="left:836px;top:258px;width:1px;height:453px;background:rgba(0,0,0,0.05)"></div>
<div class="t" style="left:793px;top:242px;width:40px;font-size:9.5px;letter-spacing:0.2px;color:#5e5e5e;text-align:right">1.20s</div>
<div class="ln" style="left:927px;top:239px;width:1px;height:18px;background:#b0b0b0"></div>
<div class="ln" style="left:927px;top:258px;width:1px;height:453px;background:rgba(0,0,0,0.05)"></div>
<div class="t" style="left:884px;top:242px;width:40px;font-size:9.5px;letter-spacing:0.2px;color:#5e5e5e;text-align:right">1.40s</div>
<div class="ln" style="left:1017px;top:239px;width:1px;height:18px;background:#b0b0b0"></div>
<div class="ln" style="left:1017px;top:258px;width:1px;height:453px;background:rgba(0,0,0,0.05)"></div>
<div class="t" style="left:974px;top:242px;width:40px;font-size:9.5px;letter-spacing:0.2px;color:#5e5e5e;text-align:right">1.60s</div>
<div class="ln" style="left:1108px;top:239px;width:1px;height:18px;background:#b0b0b0"></div>
<div class="ln" style="left:1108px;top:258px;width:1px;height:453px;background:rgba(0,0,0,0.05)"></div>
<div class="t" style="left:1065px;top:242px;width:40px;font-size:9.5px;letter-spacing:0.2px;color:#5e5e5e;text-align:right">1.80s</div>
<div class="ln" style="left:1198px;top:239px;width:1px;height:18px;background:#b0b0b0"></div>
<div class="ln" style="left:1198px;top:258px;width:1px;height:453px;background:rgba(0,0,0,0.05)"></div>
<div class="t" style="left:1155px;top:242px;width:40px;font-size:9.5px;letter-spacing:0.2px;color:#5e5e5e;text-align:right">2.00s</div>
<div class="ln" style="left:1288px;top:239px;width:1px;height:18px;background:#b0b0b0"></div>
<div class="ln" style="left:1288px;top:258px;width:1px;height:453px;background:rgba(0,0,0,0.05)"></div>
<div class="t" style="left:1245px;top:242px;width:40px;font-size:9.5px;letter-spacing:0.2px;color:#5e5e5e;text-align:right">2.20s</div>
<div class="ln" style="left:1379px;top:239px;width:1px;height:18px;background:#b0b0b0"></div>
<div class="ln" style="left:1379px;top:258px;width:1px;height:453px;background:rgba(0,0,0,0.05)"></div>
<div class="t" style="left:1336px;top:242px;width:40px;font-size:9.5px;letter-spacing:0.2px;color:#5e5e5e;text-align:right">2.40s</div>
<div class="ln" style="left:1469px;top:239px;width:1px;height:18px;background:#b0b0b0"></div>
<div class="ln" style="left:1469px;top:258px;width:1px;height:453px;background:rgba(0,0,0,0.05)"></div>
<div class="t" style="left:1426px;top:242px;width:40px;font-size:9.5px;letter-spacing:0.2px;color:#5e5e5e;text-align:right">2.60s</div>
<div class="ln" style="left:1560px;top:239px;width:1px;height:18px;background:#b0b0b0"></div>
<div class="ln" style="left:1560px;top:258px;width:1px;height:453px;background:rgba(0,0,0,0.05)"></div>
<div class="t" style="left:1517px;top:242px;width:40px;font-size:9.5px;letter-spacing:0.2px;color:#5e5e5e;text-align:right">2.80s</div>
<div class="ln" style="left:1650px;top:239px;width:1px;height:18px;background:#b0b0b0"></div>
<div class="ln" style="left:1650px;top:258px;width:1px;height:453px;background:rgba(0,0,0,0.05)"></div>
<div class="t" style="left:1607px;top:242px;width:40px;font-size:9.5px;letter-spacing:0.2px;color:#5e5e5e;text-align:right">3.00s</div>
<div class="ln" style="left:1741px;top:239px;width:1px;height:18px;background:#b0b0b0"></div>
<div class="ln" style="left:1741px;top:258px;width:1px;height:453px;background:rgba(0,0,0,0.05)"></div>
<div class="t" style="left:1698px;top:242px;width:40px;font-size:9.5px;letter-spacing:0.2px;color:#5e5e5e;text-align:right">3.20s</div>
<div class="ln" style="left:1831px;top:239px;width:1px;height:18px;background:#b0b0b0"></div>
<div class="ln" style="left:1831px;top:258px;width:1px;height:453px;background:rgba(0,0,0,0.05)"></div>
<div class="t" style="left:1788px;top:242px;width:40px;font-size:9.5px;letter-spacing:0.2px;color:#5e5e5e;text-align:right">3.40s</div>
<div class="ln" style="left:1921px;top:239px;width:1px;height:18px;background:#b0b0b0"></div>
<div class="ln" style="left:1921px;top:258px;width:1px;height:453px;background:rgba(0,0,0,0.05)"></div>
<div class="t" style="left:1878px;top:242px;width:40px;font-size:9.5px;letter-spacing:0.2px;color:#5e5e5e;text-align:right">3.60s</div>
<div class="ln" style="left:2012px;top:239px;width:1px;height:18px;background:#b0b0b0"></div>
<div class="ln" style="left:2012px;top:258px;width:1px;height:453px;background:rgba(0,0,0,0.05)"></div>
<div class="t" style="left:1969px;top:242px;width:40px;font-size:9.5px;letter-spacing:0.2px;color:#5e5e5e;text-align:right">3.80s</div>
<div class="ln" style="left:2102px;top:239px;width:1px;height:18px;background:#b0b0b0"></div>
<div class="ln" style="left:2102px;top:258px;width:1px;height:453px;background:rgba(0,0,0,0.05)"></div>
<div class="t" style="left:2059px;top:242px;width:40px;font-size:9.5px;letter-spacing:0.2px;color:#5e5e5e;text-align:right">4.00s</div>
<div class="ln" style="left:2193px;top:239px;width:1px;height:18px;background:#b0b0b0"></div>
<div class="ln" style="left:2193px;top:258px;width:1px;height:453px;background:rgba(0,0,0,0.05)"></div>
<div class="t" style="left:2150px;top:242px;width:40px;font-size:9.5px;letter-spacing:0.2px;color:#5e5e5e;text-align:right">4.20s</div>
<div class="ln" style="left:2283px;top:239px;width:1px;height:18px;background:#b0b0b0"></div>
<div class="ln" style="left:2283px;top:258px;width:1px;height:453px;background:rgba(0,0,0,0.05)"></div>
<div class="t" style="left:2240px;top:242px;width:40px;font-size:9.5px;letter-spacing:0.2px;color:#5e5e5e;text-align:right">4.40s</div>
<div class="ln" style="left:2374px;top:239px;width:1px;height:18px;background:#b0b0b0"></div>
<div class="ln" style="left:2374px;top:258px;width:1px;height:453px;background:rgba(0,0,0,0.05)"></div>
<div class="t" style="left:2331px;top:242px;width:40px;font-size:9.5px;letter-spacing:0.2px;color:#5e5e5e;text-align:right">4.60s</div>
<div class="ln" style="left:2464px;top:239px;width:1px;height:18px;background:#b0b0b0"></div>
<div class="ln" style="left:2464px;top:258px;width:1px;height:453px;background:rgba(0,0,0,0.05)"></div>
<div class="t" style="left:2421px;top:242px;width:40px;font-size:9.5px;letter-spacing:0.2px;color:#5e5e5e;text-align:right">4.80s</div>
<div class="t" style="left:2510px;top:242px;width:40px;font-size:9.5px;letter-spacing:0.2px;color:#5e5e5e;text-align:right">5.00s</div>
<div class="ln" style="left:294px;top:76px;width:1px;height:635px;background:#9e9e9e"></div>
<svg class="abs" style="left:3px;top:264px" width="11" height="9" viewBox="0 0 11 9"><path d="M1 1 H10 L5.5 8 Z" fill="#8c8c8c"/></svg>
<svg class="abs" style="left:18px;top:260px" width="13" height="17" viewBox="0 0 13 17"><path d="M0.5 0.5 H7.8 L11.8 4.5 V15.5 H0.5 Z" fill="#fff" stroke="#a9a9a9" stroke-width="1"/><path d="M7.8 0.5 V4.5 H11.8" fill="#e6e6e6" stroke="#a9a9a9" stroke-width="0.8"/><path d="M4.6 7.6 L2.5 9.5 L4.6 11.4 M7.4 7.6 L9.5 9.5 L7.4 11.4" stroke="#2030d0" stroke-width="1.2" fill="none" stroke-linecap="round"/></svg>
<div class="t" style="left:35px;top:262px;font-size:12px;color:#111">blogbisogno.wordpress.com</div>
<div class="abs" style="left:27px;top:281px;width:14px;height:14px;box-sizing:border-box;border:1px solid #8f78b8;border-radius:2px;background:#a68fcb;color:#fff;font-size:12px;line-height:13px;text-align:center">S</div>
<div class="t" style="left:45px;top:282px;font-size:12px;color:#111">Script Evaluated<span style="color:#5e5e5e"> — line 23</span></div>
<svg class="abs" style="left:28px;top:300px" width="13" height="17" viewBox="0 0 13 17"><path d="M0.5 0.5 H7.8 L11.8 4.5 V15.5 H0.5 Z" fill="#fff" stroke="#a9a9a9" stroke-width="1"/><path d="M7.8 0.5 V4.5 H11.8" fill="#e6e6e6" stroke="#a9a9a9" stroke-width="0.8"/><text x="1.5" y="11.8" font-family="Liberation Sans" font-size="9.6" font-weight="bold" fill="#a31422" textLength="8.4" lengthAdjust="spacingAndGlyphs">css</text></svg>
<div class="t" style="left:45px;top:302px;font-size:12px;color:#111">_static<span style="color:#5e5e5e"> — s0.wp.com</span></div>
<svg class="abs" style="left:28px;top:320px" width="13" height="17" viewBox="0 0 13 17"><path d="M0.5 0.5 H7.8 L11.8 4.5 V15.5 H0.5 Z" fill="#fff" stroke="#a9a9a9" stroke-width="1"/><path d="M7.8 0.5 V4.5 H11.8" fill="#e6e6e6" stroke="#a9a9a9" stroke-width="0.8"/><text x="1.5" y="11.8" font-family="Liberation Sans" font-size="9.6" font-weight="bold" fill="#a31422" textLength="8.4" lengthAdjust="spacingAndGlyphs">css</text></svg>
<div class="t" style="left:45px;top:322px;font-size:12px;color:#111">global-print.css<span style="color:#5e5e5e"> — s1.wp.com</span></div>
<svg class="abs" style="left:28px;top:340px" width="13" height="17" viewBox="0 0 13 17"><path d="M0.5 0.5 H7.8 L11.8 4.5 V15.5 H0.5 Z" fill="#fff" stroke="#a9a9a9" stroke-width="1"/><path d="M7.8 0.5 V4.5 H11.8" fill="#e6e6e6" stroke="#a9a9a9" stroke-width="0.8"/><text x="1.5" y="11.8" font-family="Liberation Sans" font-size="9.6" font-weight="bold" fill="#a31422" textLength="8.4" lengthAdjust="spacingAndGlyphs">css</text></svg>
<div class="t" style="left:45px;top:342px;font-size:12px;color:#111">_static<span style="color:#5e5e5e"> — s2.wp.com</span></div>
<svg class="abs" style="left:14px;top:363px" width="9" height="11" viewBox="0 0 9 11"><path d="M1 1 V10 L8 5.5 Z" fill="#8c8c8c"/></svg>
<svg class="abs" style="left:28px;top:360px" width="13" height="17" viewBox="0 0 13 17"><path d="M0.5 0.5 H7.8 L11.8 4.5 V15.5 H0.5 Z" fill="#fff" stroke="#a9a9a9" stroke-width="1"/><path d="M7.8 0.5 V4.5 H11.8" fill="#e6e6e6" stroke="#a9a9a9" stroke-width="0.8"/><text x="2.9" y="11.8" font-family="Liberation Sans" font-size="9" font-weight="bold" fill="#4636cf" textLength="5.6" lengthAdjust="spacingAndGlyphs">js</text></svg>
<div class="t" style="left:45px;top:362px;font-size:12px;color:#111">_static<span style="color:#5e5e5e"> — s1.wp.com</span></div>
<svg class="abs" style="left:28px;top:380px" width="13" height="17" viewBox="0 0 13 17"><path d="M0.5 0.5 H7.8 L11.8 4.5 V15.5 H0.5 Z" fill="#fff" stroke="#a9a9a9" stroke-width="1"/><path d="M7.8 0.5 V4.5 H11.8" fill="#e6e6e6" stroke="#a9a9a9" stroke-width="0.8"/><text x="2.9" y="11.8" font-family="Liberation Sans" font-size="9" font-weight="bold" fill="#4636cf" textLength="5.6" lengthAdjust="spacingAndGlyphs">js</text></svg>
<div class="t" style="left:45px;top:382px;font-size:12px;color:#111">gprofiles.js<span style="color:#5e5e5e"> — 0.gravatar.com</span></div>
<svg class="abs" style="left:28px;top:400px" width="13" height="17" viewBox="0 0 13 17"><path d="M0.5 0.5 H7.8 L11.8 4.5 V15.5 H0.5 Z" fill="#fff" stroke="#a9a9a9" stroke-width="1"/><path d="M7.8 0.5 V4.5 H11.8" fill="#e6e6e6" stroke="#a9a9a9" stroke-width="0.8"/><text x="2.9" y="11.8" font-family="Liberation Sans" font-size="9" font-weight="bold" fill="#4636cf" textLength="5.6" lengthAdjust="spacingAndGlyphs">js</text></svg>
<div class="t" style="left:45px;top:402px;font-size:12px;color:#111">_static<span style="color:#5e5e5e"> — s1.wp.com</span></div>
<svg class="abs" style="left:28px;top:420px" width="13" height="17" viewBox="0 0 13 17"><path d="M0.5 0.5 H7.8 L11.8 4.5 V15.5 H0.5 Z" fill="#fff" stroke="#a9a9a9" stroke-width="1"/><path d="M7.8 0.5 V4.5 H11.8" fill="#e6e6e6" stroke="#a9a9a9" stroke-width="0.8"/><text x="1.5" y="11.8" font-family="Liberation Sans" font-size="9.6" font-weight="bold" fill="#a31422" textLength="8.4" lengthAdjust="spacingAndGlyphs">css</text></svg>
<div class="t" style="left:45px;top:422px;font-size:12px;color:#111">merriweather.css<span style="color:#5e5e5e"> — s1.wp.com</span></div>
<svg class="abs" style="left:28px;top:440px" width="13" height="17" viewBox="0 0 13 17"><path d="M0.5 0.5 H7.8 L11.8 4.5 V15.5 H0.5 Z" fill="#fff" stroke="#a9a9a9" stroke-width="1"/><path d="M7.8 0.5 V4.5 H11.8" fill="#e6e6e6" stroke="#a9a9a9" stroke-width="0.8"/><text x="1.5" y="11.8" font-family="Liberation Sans" font-size="9.6" font-weight="bold" fill="#a31422" textLength="8.4" lengthAdjust="spacingAndGlyphs">css</text></svg>
<div class="t" style="left:45px;top:442px;font-size:12px;color:#111">merriweather.css<span style="color:#5e5e5e"> — s1.wp.com</span></div>
<svg class="abs" style="left:14px;top:463px" width="9" height="11" viewBox="0 0 9 11"><path d="M1 1 V10 L8 5.5 Z" fill="#8c8c8c"/></svg>
<svg class="abs" style="left:28px;top:460px" width="13" height="17" viewBox="0 0 13 17"><path d="M0.5 0.5 H7.8 L11.8 4.5 V15.5 H0.5 Z" fill="#fff" stroke="#a9a9a9" stroke-width="1"/><path d="M7.8 0.5 V4.5 H11.8" fill="#e6e6e6" stroke="#a9a9a9" stroke-width="0.8"/><text x="2.9" y="11.8" font-family="Liberation Sans" font-size="9" font-weight="bold" fill="#4636cf" textLength="5.6" lengthAdjust="spacingAndGlyphs">js</text></svg>
<div class="t" style="left:45px;top:462px;font-size:11.5px;color:#111">rs=ACT90oE6flmQ8EX1IFn3nlW1YvlOKmJX...</div>
<svg class="abs" style="left:28px;top:480px" width="13" height="17" viewBox="0 0 13 17"><path d="M0.5 0.5 H7.8 L11.8 4.5 V15.5 H0.5 Z" fill="#fff" stroke="#a9a9a9" stroke-width="1"/><path d="M7.8 0.5 V4.5 H11.8" fill="#e6e6e6" stroke="#a9a9a9" stroke-width="0.8"/><text x="1.5" y="11.8" font-family="Liberation Sans" font-size="9.6" font-weight="bold" fill="#a31422" textLength="8.4" lengthAdjust="spacingAndGlyphs">css</text></svg>
<div class="t" style="left:45px;top:482px;font-size:12px;color:#111">style.css<span style="color:#5e5e5e"> — s1.wp.com</span></div>
<svg class="abs" style="left:28px;top:500px" width="13" height="17" viewBox="0 0 13 17"><path d="M0.5 0.5 H7.8 L11.8 4.5 V15.5 H0.5 Z" fill="#fff" stroke="#a9a9a9" stroke-width="1"/><path d="M7.8 0.5 V4.5 H11.8" fill="#e6e6e6" stroke="#a9a9a9" stroke-width="0.8"/><text x="2.9" y="11.8" font-family="Liberation Sans" font-size="9" font-weight="bold" fill="#4636cf" textLength="5.6" lengthAdjust="spacingAndGlyphs">js</text></svg>
<div class="t" style="left:45px;top:502px;font-size:12px;color:#111">wpgroho.js<span style="color:#5e5e5e"> — s1.wp.com</span></div>
<svg class="abs" style="left:28px;top:520px" width="13" height="17" viewBox="0 0 13 17"><path d="M0.5 0.5 H7.8 L11.8 4.5 V15.5 H0.5 Z" fill="#fff" stroke="#a9a9a9" stroke-width="1"/><path d="M7.8 0.5 V4.5 H11.8" fill="#e6e6e6" stroke="#a9a9a9" stroke-width="0.8"/><text x="2.9" y="11.8" font-family="Liberation Sans" font-size="9" font-weight="bold" fill="#4636cf" textLength="5.6" lengthAdjust="spacingAndGlyphs">js</text></svg>
<div class="t" style="left:45px;top:522px;font-size:12px;color:#111">_static<span style="color:#5e5e5e"> — s0.wp.com</span></div>
<svg class="abs" style="left:28px;top:540px" width="13" height="17" viewBox="0 0 13 17"><path d="M0.5 0.5 H7.8 L11.8 4.5 V15.5 H0.5 Z" fill="#fff" stroke="#a9a9a9" stroke-width="1"/><path d="M7.8 0.5 V4.5 H11.8" fill="#e6e6e6" stroke="#a9a9a9" stroke-width="0.8"/><text x="1.5" y="11.8" font-family="Liberation Sans" font-size="9.6" font-weight="bold" fill="#a31422" textLength="8.4" lengthAdjust="spacingAndGlyphs">css</text></svg>
<div class="t" style="left:45px;top:542px;font-size:12px;color:#111">tiled-gallery.css<span style="color:#5e5e5e"> — s1.wp.com</span></div>
<svg class="abs" style="left:28px;top:560px" width="13" height="17" viewBox="0 0 13 17"><path d="M0.5 0.5 H7.8 L11.8 4.5 V15.5 H0.5 Z" fill="#fff" stroke="#a9a9a9" stroke-width="1"/><path d="M7.8 0.5 V4.5 H11.8" fill="#e6e6e6" stroke="#a9a9a9" stroke-width="0.8"/><text x="2.9" y="11.8" font-family="Liberation Sans" font-size="9" font-weight="bold" fill="#4636cf" textLength="5.6" lengthAdjust="spacingAndGlyphs">js</text></svg>
<div class="t" style="left:45px;top:562px;font-size:12px;color:#111">_static<span style="color:#5e5e5e"> — s1.wp.com</span></div>
<svg class="abs" style="left:28px;top:580px" width="13" height="17" viewBox="0 0 13 17"><path d="M0.5 0.5 H7.8 L11.8 4.5 V15.5 H0.5 Z" fill="#fff" stroke="#a9a9a9" stroke-width="1"/><path d="M7.8 0.5 V4.5 H11.8" fill="#e6e6e6" stroke="#a9a9a9" stroke-width="0.8"/><text x="2.9" y="11.8" font-family="Liberation Sans" font-size="9" font-weight="bold" fill="#4636cf" textLength="5.6" lengthAdjust="spacingAndGlyphs">js</text></svg>
<div class="t" style="left:45px;top:582px;font-size:12px;color:#111">widgets.js<span style="color:#5e5e5e"> — platform.twitter.com</span></div>
<svg class="abs" style="left:28px;top:600px" width="13" height="17" viewBox="0 0 13 17"><path d="M0.5 0.5 H7.8 L11.8 4.5 V15.5 H0.5 Z" fill="#fff" stroke="#a9a9a9" stroke-width="1"/><path d="M7.8 0.5 V4.5 H11.8" fill="#e6e6e6" stroke="#a9a9a9" stroke-width="0.8"/><text x="2.9" y="11.8" font-family="Liberation Sans" font-size="9" font-weight="bold" fill="#4636cf" textLength="5.6" lengthAdjust="spacingAndGlyphs">js</text></svg>
<div class="t" style="left:45px;top:602px;font-size:12px;color:#111">w.js<span style="color:#5e5e5e"> — stats.wp.com</span></div>
<div class="abs" style="left:17px;top:621px;width:14px;height:14px;box-sizing:border-box;border:1px solid #cf6f6f;border-radius:2px;background:#e68a8a;color:#fff;font-size:12px;line-height:13px;text-align:center">S</div>
<div class="t" style="left:35px;top:622px;font-size:12px;color:#111">Styles Recalculated</div>
<div class="abs" style="left:17px;top:641px;width:14px;height:14px;box-sizing:border-box;border:1px solid #cf6f6f;border-radius:2px;background:#e68a8a;color:#fff;font-size:12px;line-height:13px;text-align:center">S</div>
<div class="t" style="left:35px;top:642px;font-size:12px;color:#111">Styles Invalidated</div>
<svg class="abs" style="left:272px;top:378px" width="20" height="20" viewBox="0 0 20 20"><line x1="8.00" y1="12.62" x2="6.20" y2="15.74" stroke="rgba(40,40,40,0.85)" stroke-width="1.4"/><line x1="9.60" y1="13.05" x2="9.60" y2="16.65" stroke="rgba(40,40,40,0.79)" stroke-width="1.4"/><line x1="11.20" y1="12.62" x2="13.00" y2="15.74" stroke="rgba(40,40,40,0.72)" stroke-width="1.4"/><line x1="12.37" y1="11.45" x2="15.49" y2="13.25" stroke="rgba(40,40,40,0.66)" stroke-width="1.4"/><line x1="12.80" y1="9.85" x2="16.40" y2="9.85" stroke="rgba(40,40,40,0.60)" stroke-width="1.4"/><line x1="12.37" y1="8.25" x2="15.49" y2="6.45" stroke="rgba(40,40,40,0.53)" stroke-width="1.4"/><line x1="11.20" y1="7.08" x2="13.00" y2="3.96" stroke="rgba(40,40,40,0.47)" stroke-width="1.4"/><line x1="9.60" y1="6.65" x2="9.60" y2="3.05" stroke="rgba(40,40,40,0.40)" stroke-width="1.4"/><line x1="8.00" y1="7.08" x2="6.20" y2="3.96" stroke="rgba(40,40,40,0.34)" stroke-width="1.4"/><line x1="6.83" y1="8.25" x2="3.71" y2="6.45" stroke="rgba(40,40,40,0.28)" stroke-width="1.4"/><line x1="6.40" y1="9.85" x2="2.80" y2="9.85" stroke="rgba(40,40,40,0.21)" stroke-width="1.4"/><line x1="6.83" y1="11.45" x2="3.71" y2="13.25" stroke="rgba(40,40,40,0.15)" stroke-width="1.4"/></svg>
<div class="abs" style="left:295px;top:262px;width:260px;height:12px;box-sizing:border-box;border:1px solid #70a7d3;border-radius:3px;background:rgba(150,195,238,0.85);overflow:hidden"><div class="abs" style="left:228px;top:-1px;width:31px;height:12px;background:#7db3e4;box-sizing:border-box;border-left:1px solid #5b9bd4"></div></div><div class="abs" style="left:295px;top:262px;width:260px;height:12px;box-sizing:border-box;border:1px solid #6aa5da;border-radius:3px"></div>
<div class="abs" style="left:528px;top:282px;width:4px;height:12px;box-sizing:border-box;border:1px solid #9a66cf;border-radius:2px;background:#b88ae6"></div>
<div class="abs" style="left:528px;top:302px;width:32px;height:12px;box-sizing:border-box;border:1px solid #70a7d3;border-radius:3px;background:rgba(150,195,238,0.85);overflow:hidden"><div class="abs" style="left:26px;top:-1px;width:5px;height:12px;background:#7db3e4;box-sizing:border-box;border-left:1px solid #5b9bd4"></div></div><div class="abs" style="left:528px;top:302px;width:32px;height:12px;box-sizing:border-box;border:1px solid #6aa5da;border-radius:3px"></div>
<div class="abs" style="left:529px;top:322px;width:33px;height:12px;box-sizing:border-box;border:1px solid #70a7d3;border-radius:3px;background:rgba(150,195,238,0.85);overflow:hidden"><div class="abs" style="left:25px;top:-1px;width:7px;height:12px;background:#7db3e4;box-sizing:border-box;border-left:1px solid #5b9bd4"></div></div><div class="abs" style="left:529px;top:322px;width:33px;height:12px;box-sizing:border-box;border:1px solid #6aa5da;border-radius:3px"></div>
<div class="abs" style="left:529px;top:342px;width:37px;height:12px;box-sizing:border-box;border:1px solid #70a7d3;border-radius:3px;background:rgba(150,195,238,0.85);overflow:hidden"><div class="abs" style="left:32px;top:-1px;width:4px;height:12px;background:#7db3e4;box-sizing:border-box;border-left:1px solid #5b9bd4"></div></div><div class="abs" style="left:529px;top:342px;width:37px;height:12px;box-sizing:border-box;border:1px solid #6aa5da;border-radius:3px"></div>
<div class="abs" style="left:529px;top:362px;width:40px;height:12px;box-sizing:border-box;border:1px solid #70a7d3;border-radius:3px;background:rgba(150,195,238,0.85);overflow:hidden"><div class="abs" style="left:35px;top:-1px;width:4px;height:12px;background:#7db3e4;box-sizing:border-box;border-left:1px solid #5b9bd4"></div></div><div class="abs" style="left:529px;top:362px;width:40px;height:12px;box-sizing:border-box;border:1px solid #6aa5da;border-radius:3px"></div>
<div class="abs" style="left:553px;top:382px;width:2009px;height:12px;box-sizing:border-box;border:1px solid #70a7d3;border-radius:3px;background:rgba(150,195,238,0.85)"></div>
<div class="abs" style="left:554px;top:402px;width:2008px;height:12px;box-sizing:border-box;border:1px solid #70a7d3;border-radius:3px;background:rgba(150,195,238,0.85)"></div>
<div class="abs" style="left:556px;top:422px;width:2006px;height:12px;box-sizing:border-box;border:1px solid #70a7d3;border-radius:3px;background:rgba(150,195,238,0.85)"></div>
<div class="abs" style="left:562px;top:442px;width:2000px;height:12px;box-sizing:border-box;border:1px solid #70a7d3;border-radius:3px;background:rgba(150,195,238,0.85)"></div>
<div class="abs" style="left:553px;top:502px;width:2009px;height:12px;box-sizing:border-box;border:1px solid #70a7d3;border-radius:3px;background:rgba(150,195,238,0.85)"></div>
<div class="abs" style="left:554px;top:522px;width:2008px;height:12px;box-sizing:border-box;border:1px solid #70a7d3;border-radius:3px;background:rgba(150,195,238,0.85)"></div>
<div class="abs" style="left:554px;top:542px;width:2008px;height:12px;box-sizing:border-box;border:1px solid #70a7d3;border-radius:3px;background:rgba(150,195,238,0.85)"></div>
<div class="abs" style="left:554px;top:562px;width:2008px;height:12px;box-sizing:border-box;border:1px solid #70a7d3;border-radius:3px;background:rgba(150,195,238,0.85)"></div>
<div class="abs" style="left:554px;top:582px;width:2008px;height:12px;box-sizing:border-box;border:1px solid #70a7d3;border-radius:3px;background:rgba(150,195,238,0.85)"></div>
<div class="abs" style="left:554px;top:602px;width:2008px;height:12px;box-sizing:border-box;border:1px solid #70a7d3;border-radius:3px;background:rgba(150,195,238,0.85)"></div>
<div class="abs" style="left:338px;top:462px;width:4px;height:12px;box-sizing:border-box;border:1px solid #9a66cf;border-radius:2px;background:#b88ae6"></div>
<div class="abs" style="left:453px;top:462px;width:4px;height:12px;box-sizing:border-box;border:1px solid #9a66cf;border-radius:2px;background:#b88ae6"></div>
<div class="abs" style="left:526px;top:462px;width:4px;height:12px;box-sizing:border-box;border:1px solid #9a66cf;border-radius:2px;background:#b88ae6"></div>
<div class="abs" style="left:530px;top:482px;width:39px;height:12px;box-sizing:border-box;border:1px solid #70a7d3;border-radius:3px;background:rgba(150,195,238,0.85);overflow:hidden"><div class="abs" style="left:34px;top:-1px;width:4px;height:12px;background:#7db3e4;box-sizing:border-box;border-left:1px solid #5b9bd4"></div></div><div class="abs" style="left:530px;top:482px;width:39px;height:12px;box-sizing:border-box;border:1px solid #6aa5da;border-radius:3px"></div>
<div class="abs" style="left:528px;top:622px;width:4px;height:12px;box-sizing:border-box;border:1px solid #d26a6a;border-radius:2px;background:#ec9a9a"></div>
<div class="abs" style="left:536px;top:622px;width:4px;height:12px;box-sizing:border-box;border:1px solid #d26a6a;border-radius:2px;background:#ec9a9a"></div>
<div class="abs" style="left:528px;top:642px;width:4px;height:12px;box-sizing:border-box;border:1px solid #d26a6a;border-radius:2px;background:#ec9a9a"></div>
</div></body></html>
